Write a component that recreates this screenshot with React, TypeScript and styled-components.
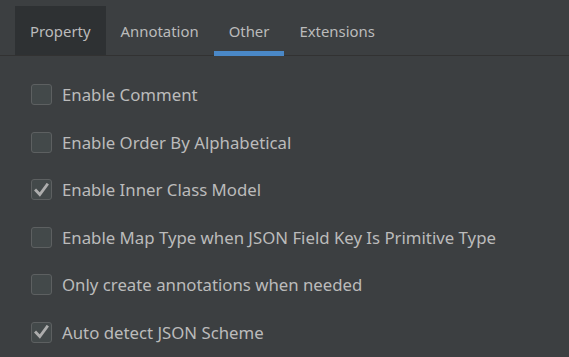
import { createGlobalStyle, styled } from "styled-components";

const Global = createGlobalStyle`
  html, body {
    margin: 0;
    padding: 0;
    background: #3c3f41;
  }
  body {
    width: 569px;
    height: 357px;
    overflow: hidden;
    font-family: "Noto Sans", "Open Sans", sans-serif;
    color: #bbbbbb;
  }
`;

const Page = styled.div`
  display: flex;
  flex-direction: column;
  width: 569px;
  height: 357px;
  background: #3c3f41;
`;

const TabBar = styled.div`
  display: flex;
  padding: 6px 0 0 15px;
  border-bottom: 1px solid #323232;
`;

const Tab = styled.div<{ $selected?: boolean; $active?: boolean }>`
  position: relative;
  height: 49px;
  padding: 0 15px;
  display: flex;
  align-items: center;
  font-size: 14.9px;
  color: #bbbbbb;
  background: ${(p) => (p.$selected ? "#2e3133" : "transparent")};

  &::after {
    content: "";
    display: ${(p) => (p.$active ? "block" : "none")};
    position: absolute;
    left: 0;
    right: 0;
    bottom: -1px;
    height: 5px;
    background: #4a88c7;
  }
`;

const Options = styled.div`
  display: flex;
  flex-direction: column;
  padding: 28px 0 0 31px;
  gap: 26.6px;
`;

const Row = styled.label`
  display: flex;
  align-items: center;
  gap: 10px;
  height: 21px;
  font-size: 16.8px;
  color: #bbbbbb;
`;

const Box = styled.span`
  width: 19px;
  height: 19px;
  border: 1px solid #5d6061;
  border-radius: 3px;
  background: #43494a;
  display: flex;
  align-items: center;
  justify-content: center;
`;

function Check() {
  return (
    <svg width="15" height="14" viewBox="0 0 15 14">
      <path
        d="M2 7.5 L5.8 11.5 L13 1.8"
        fill="none"
        stroke="#adadad"
        strokeWidth="2.8"
        strokeLinecap="square"
      />
    </svg>
  );
}

const options = [
  { label: "Enable Comment", checked: false },
  { label: "Enable Order By Alphabetical", checked: false },
  { label: "Enable Inner Class Model", checked: true },
  { label: "Enable Map Type when JSON Field Key Is Primitive Type", checked: false },
  { label: "Only create annotations when needed", checked: false },
  { label: "Auto detect JSON Scheme", checked: true },
];

export default function App() {
  return (
    <Page>
      <Global />
      <TabBar>
        <Tab $selected>Property</Tab>
        <Tab>Annotation</Tab>
        <Tab $active>Other</Tab>
        <Tab>Extensions</Tab>
      </TabBar>
      <Options>
        {options.map((o) => (
          <Row key={o.label}>
            <Box>{o.checked && <Check />}</Box>
            {o.label}
          </Row>
        ))}
      </Options>
    </Page>
  );
}
